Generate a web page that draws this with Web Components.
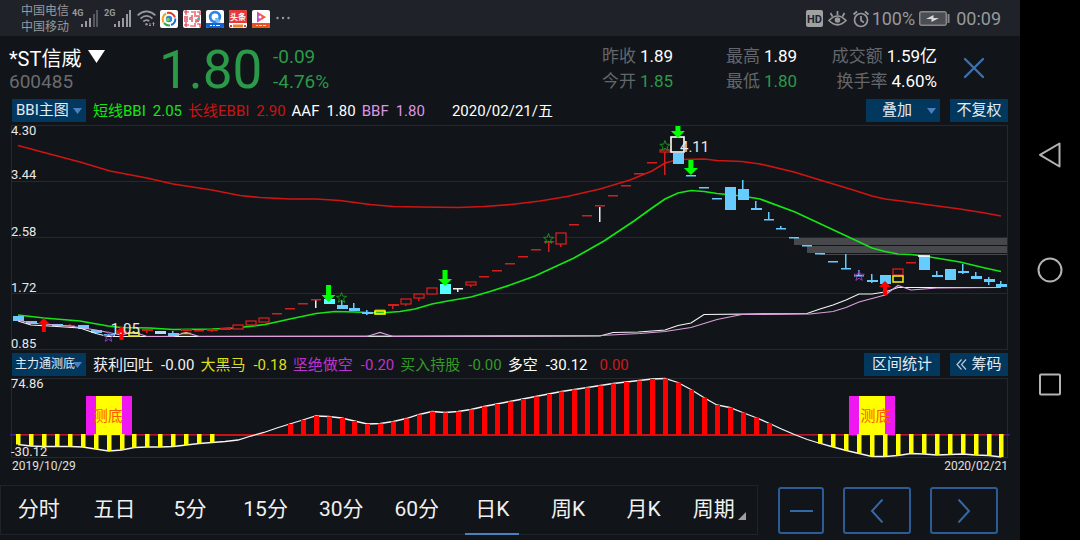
<!DOCTYPE html>
<html lang="zh-CN">
<head>
<meta charset="utf-8">
<meta name="viewport" content="width=device-width, initial-scale=1">
<title>*ST信威 600485</title>
<style>
  html, body { margin: 0; background: #000; }
  body { font-family: Roboto, "Noto Sans CJK SC", sans-serif; color: #fff; }
</style>
</head>
<body>
<stock-screen></stock-screen>

<script>
const RESET = `
  *, *::before, *::after { box-sizing: border-box; }
  button, select { font: inherit; color: inherit; background: none; border: 0; border-radius: 0; margin: 0; padding: 0; cursor: pointer; }
  svg { display: block; }
`;

class BaseElement extends HTMLElement {
  constructor() {
    super();
    this.attachShadow({ mode: 'open' });
  }
  connectedCallback() {
    this.shadowRoot.innerHTML = `<style>${RESET}${this.styles()}</style>${this.markup()}`;
  }
  styles() { return ''; }
  markup() { return ''; }
}

/* ---------- phone status bar ---------- */
customElements.define('status-bar', class extends BaseElement {
  styles() {
    return `
      :host { display: flex; align-items: center; height: 36px; padding: 0 19px 0 21px; background: #1f2228; color: #97999c; }
      .carriers { font-size: 12px; line-height: 16px; width: 51px; margin-top: 2px; }
      .gen { font-size: 9px; line-height: 9px; font-weight: 700; align-self: flex-start; margin-top: 9px; width: 9px; }
      .second { margin-left: 5px; width: 10px; }
      .wifi { margin: 0 4px 0 5px; }
      .apps { display: flex; gap: 5px; margin-top: 1px; }
      .more { margin-left: 6px; }
      .right { display: flex; align-items: center; margin-left: auto; font-size: 18px; line-height: 24px; margin-top: 1px; }
      .right svg + svg { margin-left: 5px; }
      .pct { margin: 0 4px 0 2px; }
      .time { margin-left: 6px; }
    `;
  }
  markup() {
    return `
      <div class="carriers"><div>中国电信</div><div>中国移动</div></div>
      <span class="gen">4G</span>
      <svg width="18" height="17" viewBox="0 0 18 17" fill="#97999c"><rect x="0" y="14" width="2" height="3"/><rect x="4" y="11" width="2" height="6"/><rect x="8" y="8" width="2" height="9"/><g fill="#55585c"><rect x="12" y="4" width="2" height="13"/><rect x="15" y="0" width="2" height="17"/></g></svg>
      <span class="gen second">2G</span>
      <svg width="18" height="17" viewBox="0 0 18 17" fill="#97999c"><rect x="0" y="14" width="2" height="3"/><rect x="4" y="11" width="2" height="6"/><rect x="8" y="8" width="2" height="9"/><rect x="12" y="4" width="2" height="13"/><rect x="15" y="0" width="2" height="17"/></svg>
      <svg class="wifi" width="19" height="17" viewBox="0 0 19 17" fill="none" stroke="#97999c" stroke-width="1.7"><path d="M.6 5.3Q9.500-2.500 18.400 5.300M3.500 8.600Q9.500 3.200 15.500 8.600M6.300 11.500Q9.500 8.700 12.300 11.200"/><circle cx="9.500" cy="14.300" r="1.200" fill="#97999c" stroke="none"/><path d="M13 13v3M16.500 12.500v3.500M12 15l1 1 1-1M15.500 13.500l1-1 1 1" stroke-width="1"/></svg>
      <div class="apps">
        <svg width="18" height="18" viewBox="0 0 18 18" fill="none" stroke-width="2"><rect width="18" height="18" rx="2" fill="#fff"/><path d="M3.500 12.500A6.500 6.500 0 0 1 6 3.500" stroke="#f0a21c"/><path d="M7 3A6.500 6.500 0 0 1 15 7.500" stroke="#e23b2c"/><path d="M15.300 8.500A6.500 6.500 0 0 1 11 15" stroke="#1f6fd0"/><path d="M10 15.300A6.500 6.500 0 0 1 4 13" stroke="#35a853"/><circle cx="9" cy="9" r="3.200" fill="#2b87d8"/><circle cx="8" cy="9.500" r="1.800" fill="#8dd047"/></svg>
        <svg width="18" height="18" viewBox="0 0 18 18" fill="none" stroke="#e03a45" stroke-width="1.200"><rect width="18" height="18" rx="2" fill="#fff" stroke="none"/><path d="M1 2h5M3 0v5M8 2h3M12 1v4M14 2h3v3M1 15h5M3 12v5M7 16h4M12 13v4M14 14h3v3"/><path d="M2 6v6M4 6v6M6 9h2M9 5v7M11 6h5v4h-4M12 12l4-1" stroke="#e8616c" stroke-width="1.600"/><path d="M6.500 7.500h2M14 8.500h3" stroke="#35b4c8"/></svg>
        <svg width="18" height="18" viewBox="0 0 18 18"><rect width="18" height="18" rx="2" fill="#fff"/><path d="M0 13h18v3a2 2 0 0 1-2 2H2a2 2 0 0 1-2-2z" fill="#1261d0"/><circle cx="9" cy="7" r="4.800" fill="none" stroke="#2f86ea" stroke-width="2.800"/><path d="M9 8q4-1 5.500 4.500H10z" fill="#6cc0ff"/><path d="M4 15.500h2M7 15.500h2M10 15.500h4" stroke="#fff"/></svg>
        <svg width="18" height="18" viewBox="0 0 18 18"><rect width="18" height="18" rx="2" fill="#fff"/><path d="M2 0h14a2 2 0 0 1 2 2v11H0V2a2 2 0 0 1 2-2z" fill="#e5393b"/><text x="9" y="10" text-anchor="middle" font-size="8" font-weight="700" fill="#fff">头条</text><path d="M4 14.500h10v3H4z" fill="#f08026"/><path d="M1 16h2M15 16h2" stroke="#e5393b" stroke-width="2"/></svg>
        <svg width="18" height="18" viewBox="0 0 18 18"><rect width="18" height="18" rx="2" fill="#fff"/><path d="M0 13h18v3a2 2 0 0 1-2 2H2a2 2 0 0 1-2-2z" fill="#e85420"/><path d="M5 1.500L14 7l-9 5.500z" fill="#f7602c"/><path d="M5 1.500L10 7 5 12.500z" fill="#b64df0"/><path d="M5 12.500l4-5.500 5 0z" fill="#f44f8c"/><circle cx="8" cy="7" r="1.500" fill="#fff"/><path d="M4 15.500h2M7 15.500h3M11 15.500h3" stroke="#ffd8b0"/></svg>
      </div>
      <svg class="more" width="14" height="4" viewBox="0 0 14 4" fill="#97999c"><circle cx="1.500" cy="2" r="1.200"/><circle cx="7" cy="2" r="1.200"/><circle cx="12.500" cy="2" r="1.200"/></svg>
      <div class="right">
        <svg width="17" height="17" viewBox="0 0 17 17"><rect width="17" height="17" rx="2" fill="#9fa1a3"/><text x="8.500" y="12.500" text-anchor="middle" font-size="11" font-weight="700" fill="#1f2228">HD</text></svg>
        <svg width="19" height="17" viewBox="0 0 19 17" fill="none" stroke="#97999c" stroke-width="1.700"><path d="M1 10.500Q9.500 1.500 18 10.500 9.500 19 1 10.500zM9.500 5V1M4.500 6.500L2.500 3M14.500 6.500l2-3.500"/><circle cx="9.500" cy="10" r="2.800" fill="#97999c" stroke="none"/></svg>
        <svg width="18" height="18" viewBox="0 0 18 18" fill="none" stroke="#97999c" stroke-width="1.700"><circle cx="9" cy="10" r="6.500"/><path d="M9 6v4.500l3 2M1.500 4.500L5 1.500M16.500 4.500L13 1.500"/></svg>
        <span class="pct">100%</span>
        <svg width="31" height="15" viewBox="0 0 31 15"><rect x=".75" y=".75" width="26.500" height="13.500" rx="2" fill="#4a4d51" stroke="#85878a" stroke-width="1.500"/><rect x="28.500" y="3" width="2" height="9" fill="#85878a"/><path d="M7 8l7.500-4v3H20l-7.500 4V8z" fill="#d6d7d8"/></svg>
        <span class="time">00:09</span>
      </div>
    `;
  }
});

/* ---------- quote header ---------- */
customElements.define('quote-value', class extends BaseElement {
  styles() {
    return `
      :host { display: flex; gap: 4px; font-size: 17px; line-height: 25px; white-space: nowrap; justify-content: var(--side, flex-start); }
      .label { color: #63666a; }
      .value { color: ${this.hasAttribute('down') ? '#2a9a48' : '#fff'}; }
    `;
  }
  markup() {
    return `<span class="label">${this.getAttribute('label')}</span><span class="value"><slot></slot></span>`;
  }
});

customElements.define('quote-header', class extends BaseElement {
  styles() {
    return `
      :host { display: flex; height: 62px; padding: 8px 35px 0 9px; }
      .stock { width: 150px; font-size: 20px; line-height: 24px; padding-top: 2px; }
      .stock button { display: flex; align-items: center; gap: 7px; height: 26px; }
      .stock svg { margin-bottom: 5px; }
      .code { color: #6a6c70; font-size: 19px; line-height: 20px; }
      .price { color: #2a9a48; font-size: 53px; line-height: 53px; width: 114px; }
      .change { color: #2a9a48; font-size: 19px; line-height: 25px; }
      .stats { display: grid; grid-template-columns: 124px 108px 103px; align-content: start; margin-left: auto; }
      .close { align-self: flex-start; margin: 13px 0 0 26px; width: 22px; height: 22px; }
    `;
  }
  markup() {
    return `
      <div class="stock">
        <button type="button"><span>*ST信威</span><svg width="17" height="13" viewBox="0 0 17 13"><path d="M0 0h17L8.500 13z" fill="#fff"/></svg></button>
        <div class="code">600485</div>
      </div>
      <div class="price">1.80</div>
      <div class="change"><div>-0.09</div><div>-4.76%</div></div>
      <div class="stats">
        <quote-value label="昨收">1.89</quote-value>
        <quote-value label="最高">1.89</quote-value>
        <quote-value label="成交额" style="--side:flex-end">1.59亿</quote-value>
        <quote-value label="今开" down>1.85</quote-value>
        <quote-value label="最低" down>1.80</quote-value>
        <quote-value label="换手率" style="--side:flex-end">4.60%</quote-value>
      </div>
      <button class="close" type="button" aria-label="关闭"><svg width="22" height="22" viewBox="0 0 22 22" stroke="#3b70b2" stroke-width="2.400" stroke-linecap="round"><path d="M2 2l18 18M20 2L2 20"/></svg></button>
    `;
  }
});

/* ---------- indicator row: picker, readings, actions ---------- */
customElements.define('drop-picker', class extends BaseElement {
  styles() {
    return `
      :host { display: grid; align-items: center; width: 74px; height: 23px; background: #02375e; color: #e4ebf2; }
      select, svg { grid-area: 1 / 1; }
      select { appearance: none; width: 100%; height: 23px; padding-left: var(--inset, 4px); font-size: var(--size, 15px); line-height: 23px; outline: 0; }
      svg { justify-self: end; margin-right: 4px; pointer-events: none; }
    `;
  }
  markup() {
    return `<select aria-label="${this.getAttribute('name')}"><option>${this.getAttribute('value')}</option></select>
      <svg width="9" height="6" viewBox="0 0 9 6"><path d="M0 0h9L4.500 6z" fill="#4a80c0"/></svg>`;
  }
});

customElements.define('action-button', class extends BaseElement {
  styles() {
    return `
      :host { display: block; }
      button { display: flex; align-items: center; justify-content: center; gap: 4px; width: 100%; height: 23px; font-size: 15px; line-height: 23px; background: #02375e; color: #e4ebf2; white-space: nowrap; }
    `;
  }
  markup() {
    return `<button type="button"><slot></slot></button>`;
  }
});

customElements.define('indicator-row', class extends BaseElement {
  styles() {
    return `
      :host { display: flex; align-items: flex-start; padding: 0 12px 0 12px; }
      .readings { display: flex; flex: 1; margin-left: 7px; font-size: 15px; line-height: 24px; white-space: nowrap; }
      .actions { display: flex; gap: 10px; }
    `;
  }
  markup() {
    return `<slot name="picker"></slot><div class="readings"><slot></slot></div><div class="actions"><slot name="action"></slot></div>`;
  }
});

customElements.define('indicator-reading', class extends BaseElement {
  styles() {
    return `:host { display: flex; gap: var(--gap, 8px); margin-right: 6px; color: var(--ink); }`;
  }
  markup() {
    const label = this.getAttribute('label');
    return `${label ? `<span>${label}</span>` : ''}<span><slot></slot></span>`;
  }
});

/* ---------- charts ---------- */
const STEP = 12.94;
const barX = i => 7 + i * STEP;
const TOP = 125;

/* [index, kind, bodyTop, bodyBottom, wickTop, wickBottom] */
const CANDLES = [
  [0,'d',316,321],[1,'d',321,324],[3,'d',324,326],[4,'u',325,326,324,328],[5,'d',325,329],[6,'d',330,333],
  [7,'d',334,336],[8,'u',332,334],[10,'u',329,331,329,333],[11,'p',331,334],[12,'d',333,336,331,336],
  [13,'u',329,331],[14,'u',330,331],[15,'u',329,331,328,332],[16,'u',328,330],[17,'h',325,329],[18,'h',321,325],
  [19,'h',318,322],[20,'u',313,314],[21,'u',308,309],[22,'u',303,304],[23,'w',300,300,300,308],[23,'u',299,300],
  [24,'c',299,304],[25,'d',305,309,300,309],[26,'d',308,311,303,311],[27,'d',312,314,310,315],[28,'u',309,310],
  [29,'u',304,306,304,309],[30,'h',299,304,304,306],[31,'h',294,298,298,301],[32,'h',288,294],[33,'c',284,294],
  [34,'w',288,289,288,292],[35,'h',282,285,285,287],[36,'u',276,277],[37,'u',270,271],[38,'u',263,264],
  [39,'u',256,257],[40,'u',249,250],[41,'u',241,242,241,252],[42,'h',233,244,244,247],[43,'u',224,225],
  [44,'u',215,216],[45,'w',207,207,207,222],[45,'u',205,206],[46,'u',195,196],[47,'u',185,186],[48,'u',173,174],
  [49,'u',162,163],[50,'h',150,152,150,175],[51,'d',153,164],[52,'d',175,176],[53,'d',187,188],[54,'d',198,199],
  [55,'d',187,210],[56,'d',189,200,180,200],[57,'d',208,210,201,210],[58,'d',219,220,212,220],[59,'d',228,229,226,229],
  [60,'d',237,238],[61,'d',245,246],[62,'d',253,254],[63,'d',261,262],[64,'d',268,269,254,269],[65,'d',275,276,270,276],
  [66,'d',280,282,274,283],[67,'d',275,284],[68,'h',269,275],[69,'u',262,263],[70,'d',256,270],[71,'d',275,277,271,277],
  [72,'d',269,280],[73,'d',271,273,264,274],[74,'d',276,279,272,279],[75,'d',279,282,277,285],[76,'d',284,287,281,287]
];
const INK = { d: '#66ccff', u: '#d41e1e', h: '#d41e1e', w: '#f0f0f0', c: '#55ffff', p: '#a8e4ff' };

const LINES = [
  ['#d01414', '18,145.5 44,152.5 80,162 110,171 147,178 173,184 212,190 240,195.5 260,197.5 290,199 316,199 340,200.5 370,204.5 393,206.5 420,207 458,207.5 484,206.5 511,204.5 540,201 567,196.5 600,189 630,180 652,171 665,163 678,159.5 704,159 717,160.5 742,161.5 760,164 794,172 820,180 850,189 872,196 885,199 905,201.5 930,205 960,209 985,213 1001,216'],
  ['#14e614', '18,315 44,318 80,321 108,326 121,327.5 150,328 173,329.500 212,329 235,328 265,324.5 290,319 316,313.5 335,311.5 355,312 380,313 400,311.500 415,309 432,304 445,301.5 471,297 490,291.5 510,285 535,276 574,258 604,241 634,221 652,208 665,199 678,193 691,190.5 704,191.5 717,193.5 742,196 760,199 795,212 840,233 872,248 885,251.5 898,254 911,254.5 930,257 960,262 985,268 1001,271.5'],
  ['#f4f4f4', '18,321 31,325 57,326.500 80,328 96,333.5 108,336.5 600,336 613,332.5 638,332 652,331 665,330 678,325.5 691,323 704,314.5 807,313.5 820,309 833,305 846,300 859,294 872,294 885,292 898,287.5 1001,287.5'],
  ['#dda0dd', '18,320 31,323 70,326 96,330 121,335 134,332 147,336.5 173,336.5 186,332.500 199,336.5 367,336.5 380,332.5 393,336.5 600,335.500 640,333.5 665,331.5 691,327.5 717,319.5 742,314.500 810,314 833,311.500 846,307.5 859,302 885,295 898,285.5 911,290 937,288 1001,287.5']
];

const candle = ([i, kind, a, b, w0, w1]) => {
  const x = Math.round(barX(i)), c = INK[kind];
  const wick = w1 ? `<rect x="${x - 1}" y="${w0 - TOP}" width="1.500" height="${w1 - w0}" fill="${c}"/>` : '';
  if (kind === 'h') return `${wick}<rect x="${x - 5}" y="${a - TOP}" width="10" height="${b - a}" fill="#111418" stroke="${c}" stroke-width="1.300"/>`;
  const w = b - a === 1 ? 10 : 11;
  return `${wick}<rect x="${x - 5}" y="${a - TOP}" width="${w}" height="${b === a ? 0 : Math.max(b - a, 1.500)}" fill="${c}"/>`;
};
const downArrow = (i, top, tip) => {
  const x = barX(i), y0 = top - TOP, y1 = tip - TOP;
  return `<path d="M${x - 2.5} ${y0}h5v${y1 - y0 - 7}h4.500l-7 7-7-7h4.500z" fill="#00ff00"/>`;
};
const upArrow = (i, tip, end) => {
  const x = barX(i), y0 = tip - TOP, y1 = end - TOP;
  return `<path d="M${x} ${y0}l6 6h-4V${y1}h-4V${y0 + 6}h-4z" fill="#ff0000"/>`;
};
const star = (i, y, color) => {
  const pts = [];
  for (let k = 0; k < 10; k++) {
    const r = k % 2 ? 2.2 : 5.5, t = -Math.PI / 2 + k * Math.PI / 5;
    pts.push(`${(barX(i) + r * Math.cos(t)).toFixed(1)},${(y - TOP + r * Math.sin(t)).toFixed(1)}`);
  }
  return `<polygon points="${pts.join(' ')}" fill="none" stroke="${color}"/>`;
};
const polyline = (pts, color, width) =>
  `<polyline points="${pts}" transform="translate(-11 ${-TOP})" fill="none" stroke="${color}" stroke-width="${width}"/>`;

const CHART_STYLE = `
  :host { display: grid; position: relative; margin: 0 12px 0 11px; font-size: 13px; line-height: 12px; color: #e8e8e8; }
  svg { grid-area: 1 / 1; width: 100%; height: 100%; overflow: visible; }
  .axis { grid-area: 1 / 1; display: grid; pointer-events: none; z-index: 1; }
  .axis div { display: flex; flex-direction: column; justify-content: flex-end; }
  .axis div:first-child { justify-content: space-between; }
  .note { position: absolute; z-index: 1; font-size: 15px; line-height: 16px; }
`;

customElements.define('price-chart', class extends BaseElement {
  styles() {
    return `${CHART_STYLE}
      :host { flex: 1; min-height: 225px; }
      svg { position: absolute; inset: 0; }
      .axis { grid-template-rows: repeat(4, 1fr); }
      .low { left: 10%; top: 87%; }
      .high { left: 67%; top: 6%; margin-left: 1px; }
    `;
  }
  markup() {
    const grid = [0, 56, 112, 168, 224].map(y => `<rect x="0" y="${y}" width="997" height="1"/>`).join('');
    return `
      <svg viewBox="0 0 997 225" preserveAspectRatio="none" role="img" aria-label="日K线图">
        <g fill="#25282c">${grid}<rect width="1" height="225"/><rect x="996" width="1" height="225"/></g>
        <g fill="#46484b"><rect x="783" y="113" width="213" height="7"/><rect x="796" y="121" width="200" height="7"/><rect x="809" y="129" width="187" height="1"/></g>
        ${LINES.slice(0, 2).map(([c, p]) => polyline(p, c, 1.7)).join('')}
        ${CANDLES.map(candle).join('')}
        ${LINES.slice(2).map(([c, p]) => polyline(p, c, 1.2)).join('')}
        <g fill="none" stroke-width="1.600">
          <rect x="118" y="208" width="10" height="3" stroke="#e6e619"/>
          <path d="M170 208.500h10" stroke="#d8b030"/>
          <rect x="364" y="186" width="10" height="3" stroke="#ffff00"/>
          <rect x="882" y="151" width="10" height="6" stroke="#e6e619"/>
          <rect x="660" y="12" width="13" height="15" stroke="#fff"/>
          <path d="M907 131h12" stroke="#fff"/>
        </g>
        ${downArrow(24, 285, 302)}${downArrow(33, 270, 286)}${downArrow(51, 126, 138)}${downArrow(52, 160, 175)}
        ${upArrow(2, 318, 332)}${upArrow(8, 326, 340)}${upArrow(67, 281, 295)}
        ${star(25, 298, '#1c8c1c')}${star(41, 239, '#1c8c1c')}${star(50, 146, '#1c8c1c')}
        ${star(7, 337, '#8a3fb0')}${star(65, 276, '#8a3fb0')}
      </svg>
      <div class="axis"><div><span>4.30</span><span>3.44</span></div><div>2.58</div><div>1.72</div><div>0.85</div></div>
      <span class="note low">1.05</span>
      <span class="note high">4.11</span>
    `;
  }
});

const TREND = [
  444.5,446,446.5,446.5,446.5,447,449,451,450,447.5,447,447,446.5,445,443.5,442.5,441.5,440,436,432.5,428,424,420,416,
  416.5,418,421,424,423.5,421.5,418.5,414.5,411.5,412.5,411.5,409.5,406.5,404,401.5,399,396.5,394,391.5,389.5,387.5,
  385.5,383.5,382,380.5,379,378.5,382.5,389.5,397.5,405,407.5,412.5,417.5,423,429,434.5,439.5,443.5,447,450.5,453.5,
  456.5,456.5,455.5,453.5,454,455,454.5,454,455,455.5,457
].map(y => y - 378);

customElements.define('trend-chart', class extends BaseElement {
  styles() {
    return `${CHART_STYLE}
      :host { height: 80px; }
      .note { color: #ff5a00; top: 30px; margin-left: 2px; }
      .first { left: 8%; }
      .last { left: 85%; }
    `;
  }
  markup() {
    const zero = 57;
    const bars = TREND.map((y, i) => {
      const x = Math.round(barX(i)) - 2;
      if (i <= 15 || i >= 62) return `<rect x="${x}" y="56" width="4.500" height="${y - 56}" fill="#ffff00"/>`;
      if (i >= 21 && i <= 58) return `<rect x="${x}" y="${y}" width="5" height="${zero - y}" fill="#ff0000"/>`;
      return '';
    }).join('');
    const flag = x => `<rect x="${x}" y="18" width="46" height="39" fill="#f018f0"/><rect x="${x + 10}" y="18" width="26" height="39" fill="#ffff00"/>`;
    return `
      <svg viewBox="0 0 997 80" preserveAspectRatio="none" role="img" aria-label="主力通测底">
        <g fill="#25282c"><rect width="997" height="1"/><rect y="79" width="997" height="1"/><rect width="1" height="80"/><rect x="996" width="1" height="80"/></g>
        <rect x="-1" y="56" width="1000" height="1.500" fill="#4a1a90"/>
        <rect x="4" y="56" width="990" height="1.500" fill="#b01836"/>
        <rect x="205" y="56" width="580" height="2" fill="#c81414"/>
        ${flag(75)}${flag(838)}
        <polyline points="${TREND.map((y, i) => `${barX(i).toFixed(1)},${y}`).join(' ')}" fill="none" stroke="#f4f4f4" stroke-width="1.300"/>
        ${bars}
      </svg>
      <div class="axis"><div><span>74.86</span><span>-30.12</span></div></div>
      <span class="note first">测底</span>
      <span class="note last">测底</span>
    `;
  }
});

/* ---------- period tabs and zoom buttons ---------- */
customElements.define('period-bar', class extends BaseElement {
  styles() {
    return `
      :host { display: flex; align-items: center; padding: 10px 22px 5px 0; }
      nav { display: grid; grid-template-columns: repeat(10, 1fr); flex: 1; height: 50px; border: 1px solid #20232b; }
      nav button { display: flex; align-items: center; justify-content: center; font-size: 21px; line-height: 46px; height: 46px; color: #f0f0f0; white-space: nowrap; }
      nav button[aria-current] { position: relative; }
      nav button[aria-current]::after { content: ""; position: absolute; left: 50%; bottom: -3px; width: 54px; margin-left: -27px; height: 2px; background: #4a80bc; }
      nav svg { align-self: flex-end; margin: 0 0 12px 3px; }
      .zoom { display: flex; gap: 19px; margin-left: 20px; padding-top: 1px; }
      .zoom button { display: grid; place-items: center; width: 68px; height: 47px; border: 2px solid #2b5c93; border-radius: 3px; }
      .zoom button:first-child { width: 46px; }
      .zoom svg { fill: none; stroke: #3569a5; stroke-width: 2; }
    `;
  }
  markup() {
    const tabs = ['分时', '五日', '5分', '15分', '30分', '60分', '日K', '周K', '月K'];
    return `
      <nav>
        ${tabs.map(t => `<button type="button"${t === '日K' ? ' aria-current="true"' : ''}>${t}</button>`).join('')}
        <button type="button">周期<svg width="8" height="8" viewBox="0 0 8 8"><path d="M8 0v8H0z" fill="#a0a0a0"/></svg></button>
      </nav>
      <div class="zoom">
        <button type="button" aria-label="缩小"><svg width="23" height="24" viewBox="0 0 23 24"><path d="M0 12h23"/></svg></button>
        <button type="button" aria-label="向左"><svg width="14" height="24" viewBox="0 0 14 24"><path d="M12.500 .5L2 12l10.500 11.500"/></svg></button>
        <button type="button" aria-label="向右"><svg width="14" height="24" viewBox="0 0 14 24"><path d="M1.500 .5L12 12 1.500 23.500"/></svg></button>
      </div>
    `;
  }
});

/* ---------- system navigation rail ---------- */
customElements.define('system-nav', class extends BaseElement {
  styles() {
    return `
      :host { display: flex; flex-direction: column; align-items: center; justify-content: center; gap: 89px; width: 60px; background: #000; }
      button { width: 26px; height: 26px; }
      svg { fill: none; stroke: #b4b4b4; stroke-width: 2; stroke-linejoin: round; }
    `;
  }
  markup() {
    return `
      <button type="button" aria-label="返回"><svg width="26" height="26" viewBox="0 0 26 26"><path d="M22.500 1.500v23L3 12.800z"/></svg></button>
      <button type="button" aria-label="主屏幕"><svg width="26" height="26" viewBox="0 0 26 26"><circle cx="13" cy="13" r="11.500"/></svg></button>
      <button type="button" aria-label="最近任务"><svg width="26" height="26" viewBox="0 0 26 26"><rect x="3" y="2.500" width="20" height="20" rx="1"/></svg></button>
    `;
  }
});

customElements.define('stock-screen', class extends BaseElement {
  styles() {
    return `
      :host { display: flex; min-height: 100vh; }
      main { display: flex; flex-direction: column; flex: 1; min-width: 0; background: #111418; }
      .upper { --gap: 7px; padding-top: 1px; height: 27px; }
      .lower { padding-top: 3px; height: 28px; }
      .short { width: 58px; }
      .wide { width: 76px; }
      .date { margin-left: 21px; }
      .range { display: flex; justify-content: space-between; padding: 0 12px; height: 17px; font-size: 12px; line-height: 17px; color: #e0e0e0; }
    `;
  }
  markup() {
    return `
      <main>
        <status-bar></status-bar>
        <quote-header></quote-header>
        <indicator-row class="upper">
          <drop-picker slot="picker" name="主图指标" value="BBI主图"></drop-picker>
          <indicator-reading label="短线BBI" style="--ink:#14e614">2.05</indicator-reading>
          <indicator-reading label="长线EBBI" style="--ink:#c81414">2.90</indicator-reading>
          <indicator-reading label="AAF" style="--ink:#fff">1.80</indicator-reading>
          <indicator-reading label="BBF" style="--ink:#dd96e4">1.80</indicator-reading>
          <span class="date">2020/02/21/五</span>
          <drop-picker slot="action" name="叠加" value="叠加" style="--inset:16px"></drop-picker>
          <action-button slot="action" class="short">不复权</action-button>
        </indicator-row>
        <price-chart></price-chart>
        <indicator-row class="lower">
          <drop-picker slot="picker" name="副图指标" value="主力通测底" style="--size:12px;--inset:3px"></drop-picker>
          <indicator-reading label="获利回吐" style="--ink:#f0f0f0">-0.00</indicator-reading>
          <indicator-reading label="大黑马" style="--ink:#dede1c">-0.18</indicator-reading>
          <indicator-reading label="坚绝做空" style="--ink:#c030d0">-0.20</indicator-reading>
          <indicator-reading label="买入持股" style="--ink:#339a28">-0.00</indicator-reading>
          <indicator-reading label="多空" style="--ink:#fff">-30.12</indicator-reading>
          <indicator-reading style="--ink:#d01818;margin-left:6px">0.00</indicator-reading>
          <action-button slot="action" class="wide">区间统计</action-button>
          <action-button slot="action" class="short"><svg width="11" height="11" viewBox="0 0 11 11" fill="none" stroke="#b9c8d8" stroke-width="1.200"><path d="M5.500 .5L1 5.500l4.500 5M10 .5L5.500 5.500l4.500 5"/></svg>筹码</action-button>
        </indicator-row>
        <trend-chart></trend-chart>
        <div class="range"><span>2019/10/29</span><span>2020/02/21</span></div>
        <period-bar></period-bar>
      </main>
      <system-nav></system-nav>
    `;
  }
});
</script>
</body>
</html>
